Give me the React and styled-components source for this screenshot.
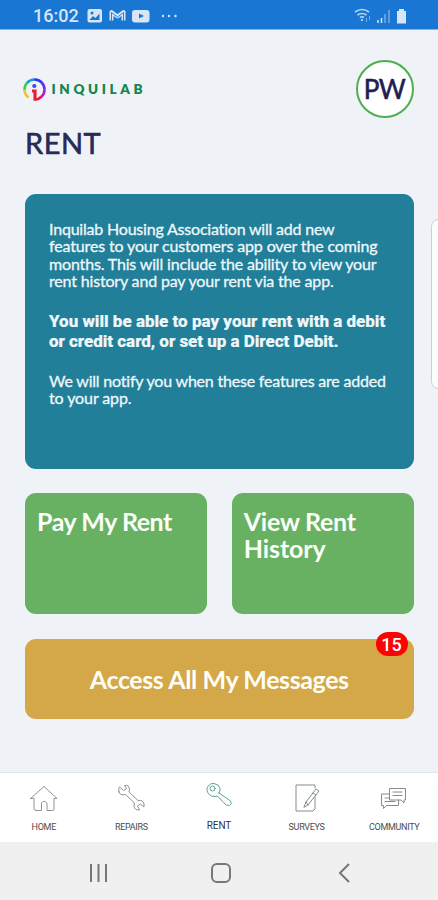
import React from "react";
import styled, { createGlobalStyle } from "styled-components";

const GlobalStyle = createGlobalStyle`
  * { box-sizing: border-box; }
  body { margin: 0; background: #eff3f8; }
`;

const Screen = styled.div`
  position: relative;
  width: 438px;
  height: 900px;
  overflow: hidden;
  display: flex;
  flex-direction: column;
  background: #eff3f8;
  font-family: Lato, sans-serif;
`;

const StatusBar = styled.header`
  flex: none;
  height: 30px;
  display: flex;
  align-items: center;
  padding: 2px 31px 0 33px;
  background: #1976d2;
  border-bottom: 1px solid #84b4e6;
  color: #d6e6f8;
`;

const Clock = styled.span`
  width: 54px;
  font: 500 18px/20px Roboto, sans-serif;
  white-space: nowrap;
`;

const StatusIcons = styled.svg`
  display: block;
  margin-left: ${(p) => p.$gap || "0"};
`;

const Content = styled.main`
  flex: 1;
  display: flex;
  flex-direction: column;
  padding: 30px 24.5px 0 25px;
`;

const BrandRow = styled.div`
  display: flex;
  justify-content: space-between;
  align-items: center;
  height: 58px;
`;

const Brand = styled.div`
  display: flex;
  align-items: center;
  gap: 5px;
  margin-left: -3.5px;
`;

const BrandName = styled.span`
  font: 800 13.5px/16px Lato, sans-serif;
  letter-spacing: 3.6px;
  color: #16864f;
`;

const Avatar = styled.div`
  width: 58px;
  height: 58px;
  display: flex;
  align-items: center;
  justify-content: center;
  border: 2px solid #4fae50;
  border-radius: 50%;
  background: #fff;
  color: #221d51;
  font-size: 26px;
  letter-spacing: -0.5px;
  -webkit-text-stroke: 0.6px #221d51;
`;

const Title = styled.h1`
  margin: 7px 0 0;
  height: 69px;
  font-weight: 400;
  font-size: 29px;
  line-height: 36px;
  letter-spacing: 0.5px;
  color: #282b55;
  -webkit-text-stroke: 0.6px #282b55;
`;

const InfoCard = styled.section`
  height: 274.500px;
  padding: 26px 24px;
  border-radius: 11px;
  background: #227f99;
  color: #eef8fb;
`;

const Paragraph = styled.p`
  margin: 0 0 ${(p) => (p.$strong ? "21px" : "22px")};
  font: ${(p) => (p.$strong ? "800 17px/20px Roboto" : "400 16px/17.3px Lato")}, sans-serif;
  -webkit-text-stroke: ${(p) => (p.$strong ? "0.2px" : "0.3px")} currentColor;
`;

const Line = styled.span`
  display: block;
  width: max-content;
  white-space: nowrap;
  letter-spacing: ${(p) => p.$spacing || "0"};
`;

const Actions = styled.div`
  display: grid;
  grid-template-columns: 1fr 1fr;
  gap: 25px;
  margin-top: 24.500px;
`;

const Tile = styled.button`
  height: 121px;
  padding: 15px 12px;
  display: flex;
  flex-direction: column;
  border: 0;
  border-radius: 11px;
  background: #68b162;
  color: #fbfff8;
  text-align: left;
  font: 700 25px/27px Lato, sans-serif;
`;

const MessagesButton = styled.button`
  position: relative;
  height: 80px;
  margin-top: 25px;
  display: flex;
  align-items: center;
  justify-content: center;
  border: 0;
  border-radius: 11px;
  background: #d4a849;
  color: #fffef6;
  font: 700 25px/30px Lato, sans-serif;
`;

const Badge = styled.span`
  position: absolute;
  top: -7px;
  right: 6px;
  width: 32px;
  height: 24px;
  border-radius: 12px;
  background: #fd0204;
  color: #fff;
  text-align: center;
  font: 500 18px/25px Roboto, sans-serif;
`;

const EdgePanel = styled.div`
  position: absolute;
  top: 219px;
  right: -8px;
  width: 15px;
  height: 170px;
  border: 1px solid #cdd0d3;
  border-radius: 8px;
  background: #fdfdfd;
`;

const Tabs = styled.nav`
  flex: none;
  height: 70px;
  display: grid;
  grid-template-columns: repeat(5, 1fr);
  border-top: 1px solid #e0e5eb;
  background: #fff;
`;

const Tab = styled.div`
  display: flex;
  flex-direction: column;
  align-items: center;
  gap: ${(p) => (p.$active ? "9px" : "8px")};
  padding-top: ${(p) => (p.$active ? "8px" : "10px")};
  color: ${(p) => (p.$active ? "#333" : "#4c4c4c")};
`;

const TabLabel = styled.span`
  font: 400 ${(p) => (p.$active ? "10px" : "9px")}/12px Roboto, sans-serif;
  letter-spacing: ${(p) => (p.$active ? "-0.1px" : "-0.3px")};
`;

const SystemBar = styled.footer`
  flex: none;
  height: 58px;
  display: flex;
  justify-content: center;
  align-items: center;
  gap: 101.500px;
  padding: 4px 0 0 4px;
  background: #f0f0f0;
`;

const stroke = { fill: "none", strokeLinecap: "round", strokeLinejoin: "round" };

const icons = {
  home: <path d="M1.500 15.500 15 3.500l13 12h-3v10.500q0 1.500-1.500 1.500H18v-7.500q-3-3.500-5.500 0v7.500H7q-2 0-2-2v-10Z" stroke="#8d9498" />,
  repairs: <path d="M3 9q-1-4 .5-5l4 3.500 3-2-2-3Q13 1.500 13.500 6l-.5 3 9 8.500q5-1 6 3.500v3l-3.500-3-3 2 2 4q-5 .5-5.500-4l.5-3-9-8.500Q4 13 3 9Z" stroke="#8d9498" />,
  rent: <g stroke="#5aa39c"><path d="M15 12 26.500 20q2 3-1 4.500-3 .5-6-3l-6-6.500q-2 1-6 0Q2.500 12.500 3 7.500 5 2 10 2.500q5 .5 6 5 .5 2.500-1 4.500Z" /><circle cx="8.500" cy="7.500" r="2.500" /></g>,
  surveys: <g stroke="#858c90"><path d="M23 5V2H4v26h17l2-2V14" /><path d="m12 24 2-5L24 6l3 2-11 14Zm2-5 2 3m5-12 3 2" /></g>,
  community: <g stroke="#858c90"><path d="M10.500 11V5.500h16V17h-1.500v3l-3-3H10.500v-6Z" /><path d="M10.500 11H2.500v11.500H4.500v3l3-3H19.500v-5.500M14 9h9m-9 3.500h9M6 15h4.500m-4.500 3.500h10" /></g>,
};

const tabs = [
  ["home", "HOME"],
  ["repairs", "REPAIRS"],
  ["rent", "RENT"],
  ["surveys", "SURVEYS"],
  ["community", "COMMUNITY"],
];

function TabIcon({ name }) {
  return <svg width="30" height="30" viewBox="0 0 30 30" strokeWidth="1" {...stroke}>{icons[name]}</svg>;
}

function Logo() {
  return (
    <svg width="25" height="25" viewBox="0 0 25 25" fill="none" strokeWidth="2.600">
      <path d="M6.500 20.500A10 10 0 0 1 3.200 16.200" stroke="#f4b936" />
      <path d="M3.400 16.700A10 10 0 0 1 2.500 12" stroke="#c8d92c" />
      <path d="M2.500 12.500A10 10 0 0 1 5.400 5.400" stroke="#41c94b" />
      <path d="M5.200 5.600A10 10 0 0 1 12.500 2.500" stroke="#149be0" />
      <path d="M12.200 2.500A10 10 0 0 1 19.600 5.400" stroke="#2439f0" />
      <path d="M19.400 5.200A10 10 0 0 1 22.500 12.500" stroke="#6a2aec" />
      <path d="M22.500 12.200A10 10 0 0 1 19.600 19.600" stroke="#b51fd0" />
      <path d="M19.800 19.400A10 10 0 0 1 12.500 22.500" stroke="#f01445" />
      <circle cx="12.300" cy="9" r="2.100" fill="#4840e8" />
      <path d="M10 14h3v9.500" stroke="#e81f37" strokeWidth="3.200" />
    </svg>
  );
}

export default function App() {
  return (
    <Screen>
      <GlobalStyle />
      <StatusBar>
        <Clock>16:02</Clock>
        <StatusIcons width="94" height="16" viewBox="0 0 94 16">
          <rect x="0.500" y="1" width="14.500" height="13.500" rx="2" fill="#d6e6f8" />
          <path d="m2.500 12 3.500-4 2.500 2 4-4.500V12Z" fill="#1976d2" /><circle cx="5" cy="5" r="1.500" fill="#1976d2" />
          <path d="M24.500 12.500V4l6 4.500 6-4.500v8.500" fill="none" stroke="#d6e6f8" strokeWidth="4" strokeLinejoin="round" />
          <path d="M24.500 13V4.500l6 4.500 6-4.500V13" fill="none" stroke="#1976d2" strokeWidth="0.900" />
          <rect x="45" y="2" width="17.500" height="12.500" rx="3" fill="#d6e6f8" /><path d="m52 5.500 5 2.500-5 2.500Z" fill="#1976d2" />
          <g fill="#d6e6f8"><circle cx="76" cy="8" r="1.200" /><circle cx="82" cy="8" r="1.200" /><circle cx="88.500" cy="8" r="1.200" /></g>
        </StatusIcons>
        <StatusIcons $gap="auto" width="53" height="16" viewBox="0 0 53 16">
          <g fill="none" stroke="#bdd7f3" strokeWidth="1.600"><path d="M1 4q7-5 14 0M3.500 7q4.500-3 9 0M6 9.500q2-1.500 4 0" /></g>
          <circle cx="8" cy="12" r="1" fill="#d6e6f8" /><path d="M12.500 10v4m3-6v4" stroke="#76ade5" />
          <path d="M24 12v3m3.500-5v5" stroke="#d6e6f8" strokeWidth="1.500" /><path d="M31 6v9m4-13v13" stroke="#76ade5" strokeWidth="1.500" />
          <path d="M43 3h2V1h5v2h2v12.500h-9Z" fill="#d6e6f8" />
        </StatusIcons>
      </StatusBar>
      <Content>
        <BrandRow>
          <Brand><Logo /><BrandName>INQUILAB</BrandName></Brand>
          <Avatar>PW</Avatar>
        </BrandRow>
        <Title>RENT</Title>
        <InfoCard>
          <Paragraph>
            <Line $spacing="-0.2px">Inquilab Housing Association will add new</Line>
            <Line $spacing="-0.14px">features to your customers app over the coming</Line>
            <Line $spacing="-0.16px">months. This will include the ability to view your</Line>
            <Line $spacing="-0.17px">rent history and pay your rent via the app.</Line>
          </Paragraph>
          <Paragraph $strong>
            <Line>You will be able to pay your rent with a debit</Line>
            <Line $spacing="-0.03px">or credit card, or set up a Direct Debit.</Line>
          </Paragraph>
          <Paragraph>
            <Line $spacing="-0.2px">We will notify you when these features are added</Line>
            <Line $spacing="-0.1px">to your app.</Line>
          </Paragraph>
        </InfoCard>
        <Actions>
          <Tile><Line $spacing="-0.45px">Pay My Rent</Line></Tile>
          <Tile><Line $spacing="-0.25px">View Rent</Line><Line $spacing="-0.1px">History</Line></Tile>
        </Actions>
        <MessagesButton><Line $spacing="-0.4px">Access All My Messages</Line><Badge>15</Badge></MessagesButton>
      </Content>
      <EdgePanel />
      <Tabs>
        {tabs.map(([name, label]) => (
          <Tab key={name} $active={name === "rent"}>
            <TabIcon name={name} />
            <TabLabel $active={name === "rent"}>{label}</TabLabel>
          </Tab>
        ))}
      </Tabs>
      <SystemBar>
        <svg width="20" height="20" stroke="#777" strokeWidth="2"><path d="M2 1v18M9.500 1v18M17 1v18" /></svg>
        <svg width="22" height="20" fill="none" stroke="#777" strokeWidth="2"><rect x="2" y="1" width="18" height="18" rx="5" /></svg>
        <svg width="20" height="20" fill="none" stroke="#777" strokeWidth="2"><path d="m15 1-9 9 9 9" /></svg>
      </SystemBar>
    </Screen>
  );
}
